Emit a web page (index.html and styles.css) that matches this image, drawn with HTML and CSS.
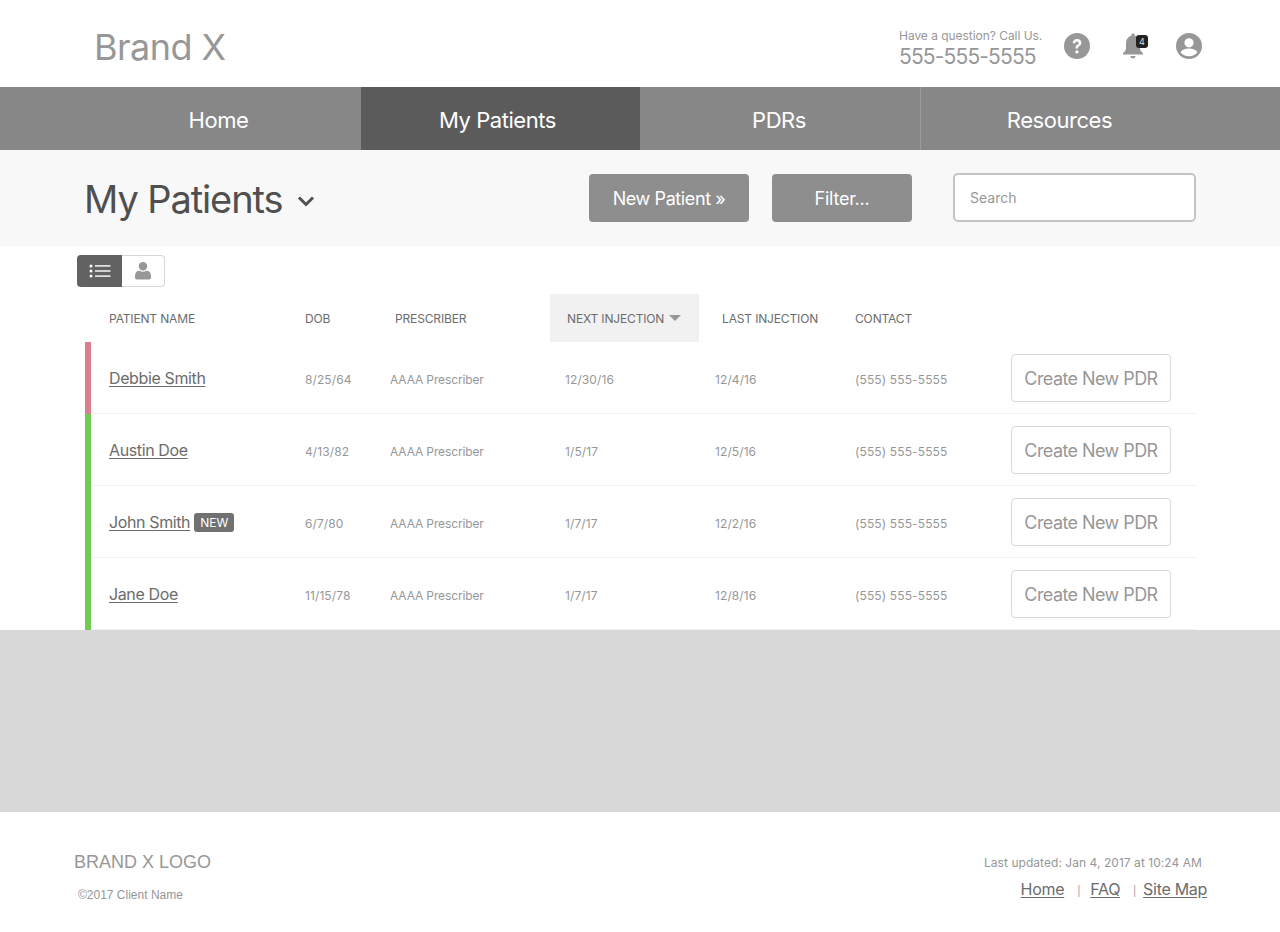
FILE: index.html
```html
<!DOCTYPE html>
<html lang="en">

<head>
    <meta charset="UTF-8">
    <title>My Patients</title>
    <link rel="stylesheet" href="styles.css">
</head>

<body>
    <header class="top-bar">
        <div class="brand">Brand X</div>
        <div class="top-right">
            <div class="call-us">
                <div class="call-label">Have a question? Call Us.</div>
                <div class="call-number">555-555-5555</div>
            </div>
            <svg class="top-icon" width="26" height="26" viewBox="0 0 26 26">
                <circle cx="13" cy="13" r="13" fill="#979797"/>
                <path d="M8.700 10.200c0-2.600 1.800-4.300 4.400-4.300 2.500 0 4.300 1.500 4.300 3.800 0 1.700-.9 2.600-2.100 3.400-.9.600-1.200 1-1.200 1.800v.5h-2.500v-.7c0-1.500.5-2.200 1.700-3 1-.7 1.400-1.100 1.400-1.800 0-.9-.7-1.500-1.600-1.500-1 0-1.700.7-1.800 1.800z" fill="#fff"/>
                <circle cx="12.900" cy="18.900" r="1.700" fill="#fff"/>
            </svg>
            <div class="bell">
                <svg width="24" height="28" viewBox="0 0 24 28">
                    <path d="M12 1.500c-1 0-1.700.7-1.700 1.700v.6C6.900 4.700 5 7.600 5 11v5c0 2.200-1 3.600-3 5v1.500h20V21c-2-1.400-3-2.800-3-5v-5c0-3.400-1.900-6.300-5.300-7.200v-.6c0-1-.7-1.700-1.700-1.700z" fill="#979797"/>
                    <path d="M9.500 24h5c0 1.400-1.100 2.500-2.500 2.500S9.500 25.400 9.500 24z" fill="#979797"/>
                </svg>
                <span class="bell-count">4</span>
            </div>
            <svg class="top-icon" width="26" height="26" viewBox="0 0 26 26">
                <circle cx="13" cy="13" r="13" fill="#979797"/>
                <circle cx="13" cy="9.800" r="4.600" fill="#fff"/>
                <path d="M4.600 19.200c1.300-2.500 4.600-3.700 8.400-3.700s7.100 1.200 8.400 3.700c-1.900 2.500-5 4.100-8.400 4.100s-6.500-1.600-8.400-4.100z" fill="#fff"/>
            </svg>
        </div>
    </header>

    <nav class="main-nav">
        <a class="nav-item nav-home">Home</a>
        <a class="nav-item active">My Patients</a>
        <a class="nav-item nav-right">PDRs</a>
        <a class="nav-item nav-right">Resources</a>
    </nav>

    <section class="page-head">
        <h1 class="page-title">My Patients
            <svg class="title-caret" width="18" height="12" viewBox="0 0 18 12">
                <path d="M2 2.500l7 7 7-7" fill="none" stroke="#4f4f4f" stroke-width="3"/>
            </svg>
        </h1>
        <button class="head-button new-patient">New Patient »</button>
        <button class="head-button filter">Filter...</button>
        <input class="search" type="text" placeholder="Search">
    </section>

    <main class="content">
        <div class="view-toggle">
            <span class="toggle-item toggle-on">
                <svg width="22" height="14" viewBox="0 0 22 14">
                    <g fill="#fff">
                        <circle cx="2" cy="2" r="1.500"/>
                        <circle cx="2" cy="7" r="1.500"/>
                        <circle cx="2" cy="12" r="1.500"/>
                        <rect x="6" y="1.200" width="15.500" height="1.400"/>
                        <rect x="6" y="6.300" width="15.500" height="1.400"/>
                        <rect x="6" y="11.400" width="15.500" height="1.400"/>
                    </g>
                </svg>
            </span>
            <span class="toggle-item">
                <svg width="16" height="18" viewBox="0 0 16 18">
                    <circle cx="8" cy="4.300" r="4.200" fill="#979797"/>
                    <path d="M0 14c0-3.500 2-5.200 4.500-5.200 1 .6 2.200 1 3.500 1s2.500-.4 3.500-1C14 8.800 16 10.500 16 14v1.500c0 1.200-.8 2-2 2H2c-1.200 0-2-.8-2-2z" fill="#979797"/>
                </svg>
            </span>
        </div>

        <div class="table-head">
            <div class="th th-name">PATIENT NAME</div>
            <div class="th th-dob">DOB</div>
            <div class="th th-prescriber">PRESCRIBER</div>
            <div class="th th-next">NEXT INJECTION <span class="sort-arrow"></span></div>
            <div class="th th-last">LAST INJECTION</div>
            <div class="th th-contact">CONTACT</div>
        </div>

        <div class="row row-red">
            <div class="cell-name"><a class="patient-link">Debbie Smith</a></div>
            <div class="cell cell-dob">8/25/64</div>
            <div class="cell cell-prescriber">AAAA Prescriber</div>
            <div class="cell cell-next">12/30/16</div>
            <div class="cell cell-last">12/4/16</div>
            <div class="cell cell-contact">(555) 555-5555</div>
            <button class="pdr-button">Create New PDR</button>
        </div>
        <div class="row">
            <div class="cell-name"><a class="patient-link">Austin Doe</a></div>
            <div class="cell cell-dob">4/13/82</div>
            <div class="cell cell-prescriber">AAAA Prescriber</div>
            <div class="cell cell-next">1/5/17</div>
            <div class="cell cell-last">12/5/16</div>
            <div class="cell cell-contact">(555) 555-5555</div>
            <button class="pdr-button">Create New PDR</button>
        </div>
        <div class="row">
            <div class="cell-name"><a class="patient-link">John Smith</a><span class="new-tag">NEW</span></div>
            <div class="cell cell-dob">6/7/80</div>
            <div class="cell cell-prescriber">AAAA Prescriber</div>
            <div class="cell cell-next">1/7/17</div>
            <div class="cell cell-last">12/2/16</div>
            <div class="cell cell-contact">(555) 555-5555</div>
            <button class="pdr-button">Create New PDR</button>
        </div>
        <div class="row">
            <div class="cell-name"><a class="patient-link">Jane Doe</a></div>
            <div class="cell cell-dob">11/15/78</div>
            <div class="cell cell-prescriber">AAAA Prescriber</div>
            <div class="cell cell-next">1/7/17</div>
            <div class="cell cell-last">12/8/16</div>
            <div class="cell cell-contact">(555) 555-5555</div>
            <button class="pdr-button">Create New PDR</button>
        </div>
    </main>

    <div class="gray-band"></div>

    <footer class="footer">
        <div class="footer-left">
            <div class="footer-logo">BRAND X LOGO</div>
            <div class="copyright">©2017 Client Name</div>
        </div>
        <div class="footer-right">
            <div class="updated">Last updated: Jan 4, 2017 at 10:24 AM</div>
            <div class="footer-links">
                <a>Home</a><span class="sep">|</span><a>FAQ</a><span class="sep sep-last">|</span><a>Site Map</a>
            </div>
        </div>
    </footer>
</body>

</html>
```

FILE: styles.css
```css
* {
    box-sizing: border-box;
}

html,
body {
    margin: 0;
    padding: 0;
}

body {
    font-family: Inter, "Liberation Sans", sans-serif;
    background-color: #fff;
    color: #666;
}

.top-bar {
    height: 87px;
    display: flex;
    justify-content: space-between;
    padding: 0 78px 0 94px;
}

.brand {
    font-size: 36px;
    line-height: 94px;
    color: #979797;
    letter-spacing: -0.55px;
}

.top-right {
    display: flex;
    align-items: flex-start;
    padding-top: 19px;
}

.call-us {
    width: 165px;
    padding-top: 8px;
}

.call-label {
    font-size: 12px;
    line-height: 17px;
    color: #979797;
    letter-spacing: -0.04px;
}

.call-number {
    font-size: 21px;
    line-height: 26px;
    color: #979797;
    letter-spacing: -0.85px;
}

.top-icon {
    display: block;
    margin-top: 14px;
}

.bell {
    position: relative;
    width: 24px;
    height: 28px;
    margin: 13px 31px 0 31px;
}

.bell-count {
    position: absolute;
    top: 3px;
    right: -3px;
    width: 12px;
    height: 13px;
    border-radius: 3px;
    background-color: #222;
    color: #ddd;
    font-size: 9px;
    line-height: 13px;
    text-align: center;
}

.main-nav {
    height: 63px;
    display: flex;
    padding-left: 81px;
    background-color: #878787;
}

.nav-item {
    width: 280px;
    font-size: 22px;
    line-height: 66px;
    text-align: center;
    color: #fff;
    padding-right: 5px;
    border-left: 1px solid #9b9b9b;
    letter-spacing: -0.45px;
}

.nav-home {
    border-left: none;
}

.nav-right {
    padding-right: 2px;
}

.nav-item.active {
    width: 279px;
    background-color: #5b5b5b;
    border-left: none;
    padding-right: 6px;
}

.nav-item.active + .nav-item {
    border-left: none;
}

.page-head {
    height: 96px;
    background-color: #f8f8f8;
    display: flex;
    align-items: flex-start;
    padding-left: 84px;
}

.page-title {
    margin: 0;
    width: 505px;
    font-size: 38px;
    line-height: 98px;
    font-weight: 400;
    color: #4f4f4f;
    letter-spacing: -1.1px;
}

.title-caret {
    margin-left: 5px;
    vertical-align: 6px;
}

.head-button {
    height: 48px;
    margin-top: 24px;
    border: none;
    border-radius: 4px;
    background-color: #8e8e8e;
    color: #fff;
    font-family: inherit;
    font-size: 18px;
    padding: 0;
}

.new-patient {
    width: 160px;
    letter-spacing: -0.4px;
}

.filter {
    width: 140px;
    margin-left: 23px;
    letter-spacing: -0.25px;
}

.search {
    width: 243px;
    height: 49px;
    margin: 23px 0 0 41px;
    border: 2px solid #c4c4c4;
    border-radius: 5px;
    background-color: #fff;
    font-family: inherit;
    font-size: 14px;
    padding: 0 15px;
}

.search::placeholder {
    color: #979797;
    opacity: 1;
}

.content {
    height: 384px;
    padding: 9px 84px 0 85px;
}

.view-toggle {
    display: flex;
    width: 88px;
    height: 32px;
    margin-left: -8px;
}

.toggle-item {
    width: 43px;
    display: flex;
    align-items: center;
    justify-content: center;
    border: 1px solid #d8d8d8;
    border-left: none;
    border-radius: 0 4px 4px 0;
}

.toggle-on {
    width: 45px;
    background-color: #626262;
    border: none;
    border-radius: 4px 0 0 4px;
}

.table-head {
    display: flex;
    height: 48px;
    margin-top: 7px;
}

.th {
    font-size: 12px;
    line-height: 50px;
    color: #6c6c6c;
    letter-spacing: -0.15px;
}

.th-name {
    width: 220px;
    padding-left: 24px;
}

.th-dob {
    width: 90px;
}

.th-prescriber {
    width: 155px;
}

.th-next {
    width: 149px;
    padding-left: 17px;
    background-color: #f1f1f1;
}

.sort-arrow {
    display: inline-block;
    margin-left: 1px;
    border-left: 6px solid transparent;
    border-right: 6px solid transparent;
    border-top: 6px solid #979797;
    vertical-align: 2px;
}

.th-last {
    width: 156px;
    padding-left: 23px;
}

.th-contact {
    width: 150px;
}

.row {
    display: flex;
    align-items: center;
    height: 72px;
    border-left: 6px solid #6fcb52;
    background-image: linear-gradient(#f0f0f0, #f0f0f0);
    background-repeat: no-repeat;
    background-position: bottom;
    background-size: 100% 1px;
}

.row-red {
    border-left-color: #db7f8e;
}

.cell-name {
    width: 214px;
    padding-left: 18px;
    font-size: 16px;
    display: flex;
    align-items: center;
}

.patient-link {
    color: #6c6c6c;
    text-decoration: underline;
    text-underline-offset: 2px;
    letter-spacing: -0.38px;
}

.new-tag {
    margin-left: 4px;
    height: 19px;
    padding: 0 6px;
    border-radius: 3px;
    background-color: #717171;
    color: #fff;
    font-size: 12px;
    line-height: 19px;
}

.cell {
    font-size: 12px;
    padding-top: 2px;
    color: #979797;
    letter-spacing: 0.1px;
}

.cell-dob {
    width: 85px;
}

.cell-prescriber {
    width: 175px;
    letter-spacing: -0.13px;
}

.cell-next {
    width: 150px;
}

.cell-last {
    width: 140px;
}

.cell-contact {
    width: 156px;
    letter-spacing: 0.13px;
}

.pdr-button {
    width: 160px;
    height: 48px;
    border: 1px solid #d8d8d8;
    border-radius: 4px;
    background-color: #fff;
    color: #979797;
    font-family: inherit;
    font-size: 18px;
    letter-spacing: -0.57px;
    padding: 0;
}

.gray-band {
    height: 182px;
    background-color: #d8d8d8;
}

.footer {
    height: 120px;
    display: flex;
    justify-content: space-between;
    padding: 0 73px 0 74px;
}

.footer-logo {
    font-family: "Liberation Sans", Arial, sans-serif;
    font-size: 18px;
    line-height: 22px;
    margin-top: 39px;
    color: #979797;
}

.copyright {
    font-family: "Liberation Sans", Arial, sans-serif;
    font-size: 12px;
    line-height: 14px;
    margin: 15px 0 0 4px;
    color: #979797;
}

.footer-right {
    display: flex;
    flex-direction: column;
    align-items: flex-end;
}

.updated {
    font-size: 12px;
    line-height: 16px;
    margin: 43px 5px 0 0;
    color: #979797;
    letter-spacing: 0.05px;
}

.footer-links {
    margin-top: 8px;
    font-size: 16px;
    line-height: 20px;
    letter-spacing: -0.3px;
}

.footer-links a {
    color: #6c6c6c;
    text-decoration: underline;
    text-underline-offset: 2px;
}

.sep {
    font-size: 10px;
    color: #979797;
    margin: 0 10px 0 13px;
}

.sep-last {
    margin-right: 7px;
}
```
